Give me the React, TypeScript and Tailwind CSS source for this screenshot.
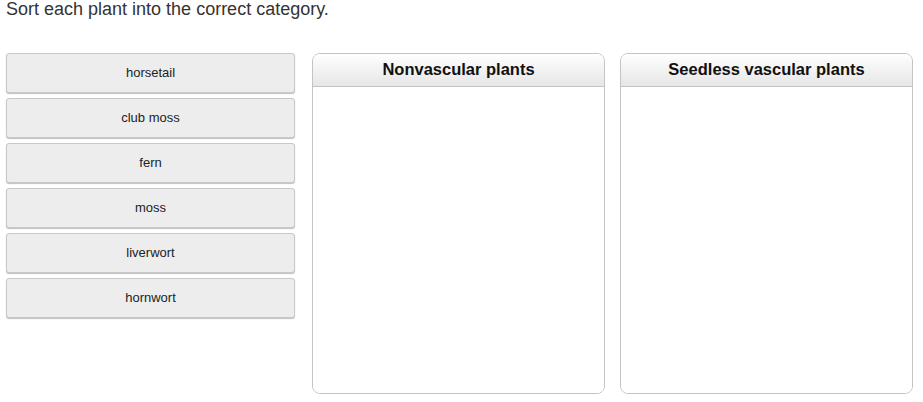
import React from 'react'

const plants = ['horsetail', 'club moss', 'fern', 'moss', 'liverwort', 'hornwort']
const buckets = ['Nonvascular plants', 'Seedless vascular plants']

export default function App() {
  return (
    <div className="w-[923px] h-[402px] bg-white font-['Liberation_Sans',Arial,sans-serif] text-[#333]">
      <p className="pl-[6px] text-[18px] leading-[18px]">Sort each plant into the correct category.</p>

      <div className="flex mt-[35px] pl-[6px]">
        {/* Draggable items */}
        <div className="flex flex-col gap-[5px] w-[289px]">
          {plants.map((p) => (
            <div
              key={p}
              className="h-[40px] flex items-center justify-center rounded-[3px] border border-[#c8c8c8] bg-[#ededed] shadow-[0_1px_1px_rgba(0,0,0,0.25)] text-[13px] text-[#222]"
            >
              {p}
            </div>
          ))}
        </div>

        {/* Drop zones */}
        {buckets.map((b, i) => (
          <div
            key={b}
            className={
              i === 0
                ? 'ml-[17px] w-[293px] h-[341px] flex flex-col rounded-[8px] border border-[#c4c4c4] overflow-hidden'
                : 'ml-[15px] w-[293px] h-[341px] flex flex-col rounded-[8px] border border-[#c4c4c4] overflow-hidden'
            }
          >
            <div className="h-[33px] pb-[2px] flex items-center justify-center border-b border-[#c4c4c4] bg-gradient-to-b from-white to-[#e6e6e6] text-[16.5px] font-bold text-[#111]">
              {b}
            </div>
            <div className="flex-1 bg-white" />
          </div>
        ))}
      </div>
    </div>
  )
}
